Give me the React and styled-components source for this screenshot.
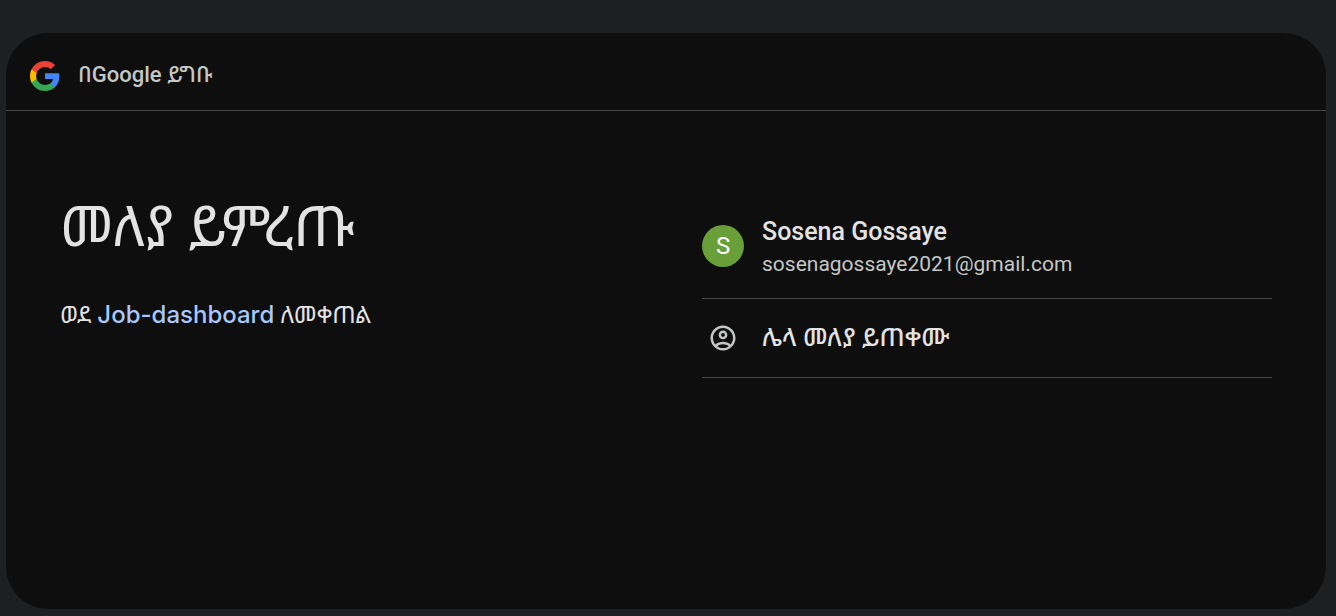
import React from "react";
import styled, { createGlobalStyle } from "styled-components";

const GlobalStyle = createGlobalStyle`
  * { box-sizing: border-box; }
  body {
    margin: 0;
    background: #1e1f20;
    color: #e3e3e3;
    font-family: "Google Sans", Roboto, "Noto Sans Ethiopic", "Noto Sans", "Liberation Sans", sans-serif;
  }
`;

const Page = styled.div`
  display: flex;
  min-height: 100vh;
  padding: 33px 10px 7px 6px;
`;

const Card = styled.div`
  flex: 1;
  min-width: 0;
  background: #0e0e0e;
  border-radius: 42px;
`;

const Header = styled.header`
  display: flex;
  align-items: flex-start;
  gap: 18px;
  padding: 28px 24px 19px;
  border-bottom: 1px solid #444746;
  color: #c4c7c5;
  font-size: 22px;
  font-weight: 500;
  line-height: 28px;
`;

const GoogleLogo = styled.svg`
  display: block;
  width: 30px;
  height: 30px;
`;

const Content = styled.main`
  display: grid;
  grid-template-columns: 1fr 1fr;
  column-gap: 72px;
  padding: 83px 54px 54px;
`;

const Title = styled.h1`
  margin: 0 0 36px;
  font-size: 56px;
  line-height: 66px;
  font-weight: 400;
`;

const Subtitle = styled.p`
  margin: 0;
  font-size: 24px;
  line-height: 38px;
`;

const AppLink = styled.a`
  color: #a8c7fa;
  font-family: "Google Sans", Inter, sans-serif;
  font-weight: 500;
  text-decoration: none;
`;

const AccountList = styled.ul`
  margin: 0;
  padding: 0;
  list-style: none;
`;

const AccountItem = styled.li`
  border-bottom: 1px solid #444746;
`;

const AccountButton = styled.button`
  display: flex;
  align-items: center;
  gap: 18px;
  width: 100%;
  min-height: 78px;
  padding: 20px 0;
  border: 0;
  background: none;
  color: #e3e3e3;
  font: inherit;
  text-align: left;
  cursor: pointer;
`;

const IconSlot = styled.span`
  display: flex;
  flex: none;
  align-items: center;
  justify-content: center;
  width: 42px;
  color: #c4c7c5;
`;

const Avatar = styled.span`
  flex: none;
  width: 42px;
  height: 42px;
  border-radius: 50%;
  background: #689f38;
  color: #fff;
  font-size: 24px;
  line-height: 42px;
  text-align: center;
`;

const Name = styled.span`
  display: block;
  font-size: 25px;
  line-height: 36px;
  font-weight: 500;
`;

const Email = styled.span`
  display: block;
  color: #c4c7c5;
  font-size: 21px;
  line-height: 28px;
`;

export default function App() {
  return (
    <Page>
      <GlobalStyle />
      <Card>
        <Header>
          <GoogleLogo viewBox="2 2 44 44" aria-hidden="true">
            <path fill="#4285F4" d="M45.12 24.5c0-1.56-.14-3.06-.4-4.5H24v8.51h11.84c-.51 2.75-2.06 5.08-4.39 6.64v5.52h7.11c4.16-3.83 6.56-9.47 6.56-16.17z" />
            <path fill="#34A853" d="M24 46c5.94 0 10.92-1.97 14.56-5.33l-7.11-5.52c-1.97 1.32-4.49 2.1-7.45 2.1-5.73 0-10.58-3.87-12.31-9.07H4.34v5.7C7.96 41.07 15.4 46 24 46z" />
            <path fill="#FBBC05" d="M11.69 28.18C11.25 26.86 11 25.45 11 24s.25-2.86.69-4.18v-5.7H4.34C2.85 17.09 2 20.45 2 24c0 3.55.85 6.91 2.34 9.88l7.35-5.7z" />
            <path fill="#EA4335" d="M24 10.75c3.23 0 6.13 1.11 8.41 3.29l6.31-6.31C34.91 4.18 29.93 2 24 2 15.4 2 7.96 6.93 4.34 14.12l7.35 5.7c1.73-5.2 6.58-9.07 12.31-9.07z" />
          </GoogleLogo>
          <span>በGoogle ይግቡ</span>
        </Header>
        <Content>
          <section>
            <Title>መለያ ይምረጡ</Title>
            <Subtitle>
              ወደ <AppLink href="#">Job-dashboard</AppLink> ለመቀጠል
            </Subtitle>
          </section>
          <AccountList>
            <AccountItem>
              <AccountButton type="button">
                <Avatar>S</Avatar>
                <span>
                  <Name>Sosena Gossaye</Name>
                  <Email>sosenagossaye2021@gmail.com</Email>
                </span>
              </AccountButton>
            </AccountItem>
            <AccountItem>
              <AccountButton type="button">
                <IconSlot>
                  <svg width="30" height="30" viewBox="0 0 24 24" fill="currentColor" aria-hidden="true">
                    <path d="M12 2C6.48 2 2 6.48 2 12s4.48 10 10 10 10-4.48 10-10S17.52 2 12 2zM7.35 18.5C8.66 17.56 10.26 17 12 17s3.34.56 4.65 1.5C15.34 19.44 13.74 20 12 20s-3.34-.56-4.65-1.5zm10.79-1.38C16.45 15.8 14.32 15 12 15s-4.45.8-6.14 2.12C4.7 15.73 4 13.95 4 12c0-4.42 3.58-8 8-8s8 3.58 8 8c0 1.95-.7 3.73-1.86 5.12z" />
                    <path d="M12 6c-1.93 0-3.5 1.57-3.5 3.5S10.07 13 12 13s3.5-1.57 3.5-3.5S13.93 6 12 6zm0 5c-.83 0-1.5-.67-1.5-1.5S11.17 8 12 8s1.5.67 1.5 1.5S12.83 11 12 11z" />
                  </svg>
                </IconSlot>
                <Name>ሌላ መለያ ይጠቀሙ</Name>
              </AccountButton>
            </AccountItem>
          </AccountList>
        </Content>
      </Card>
    </Page>
  );
}
